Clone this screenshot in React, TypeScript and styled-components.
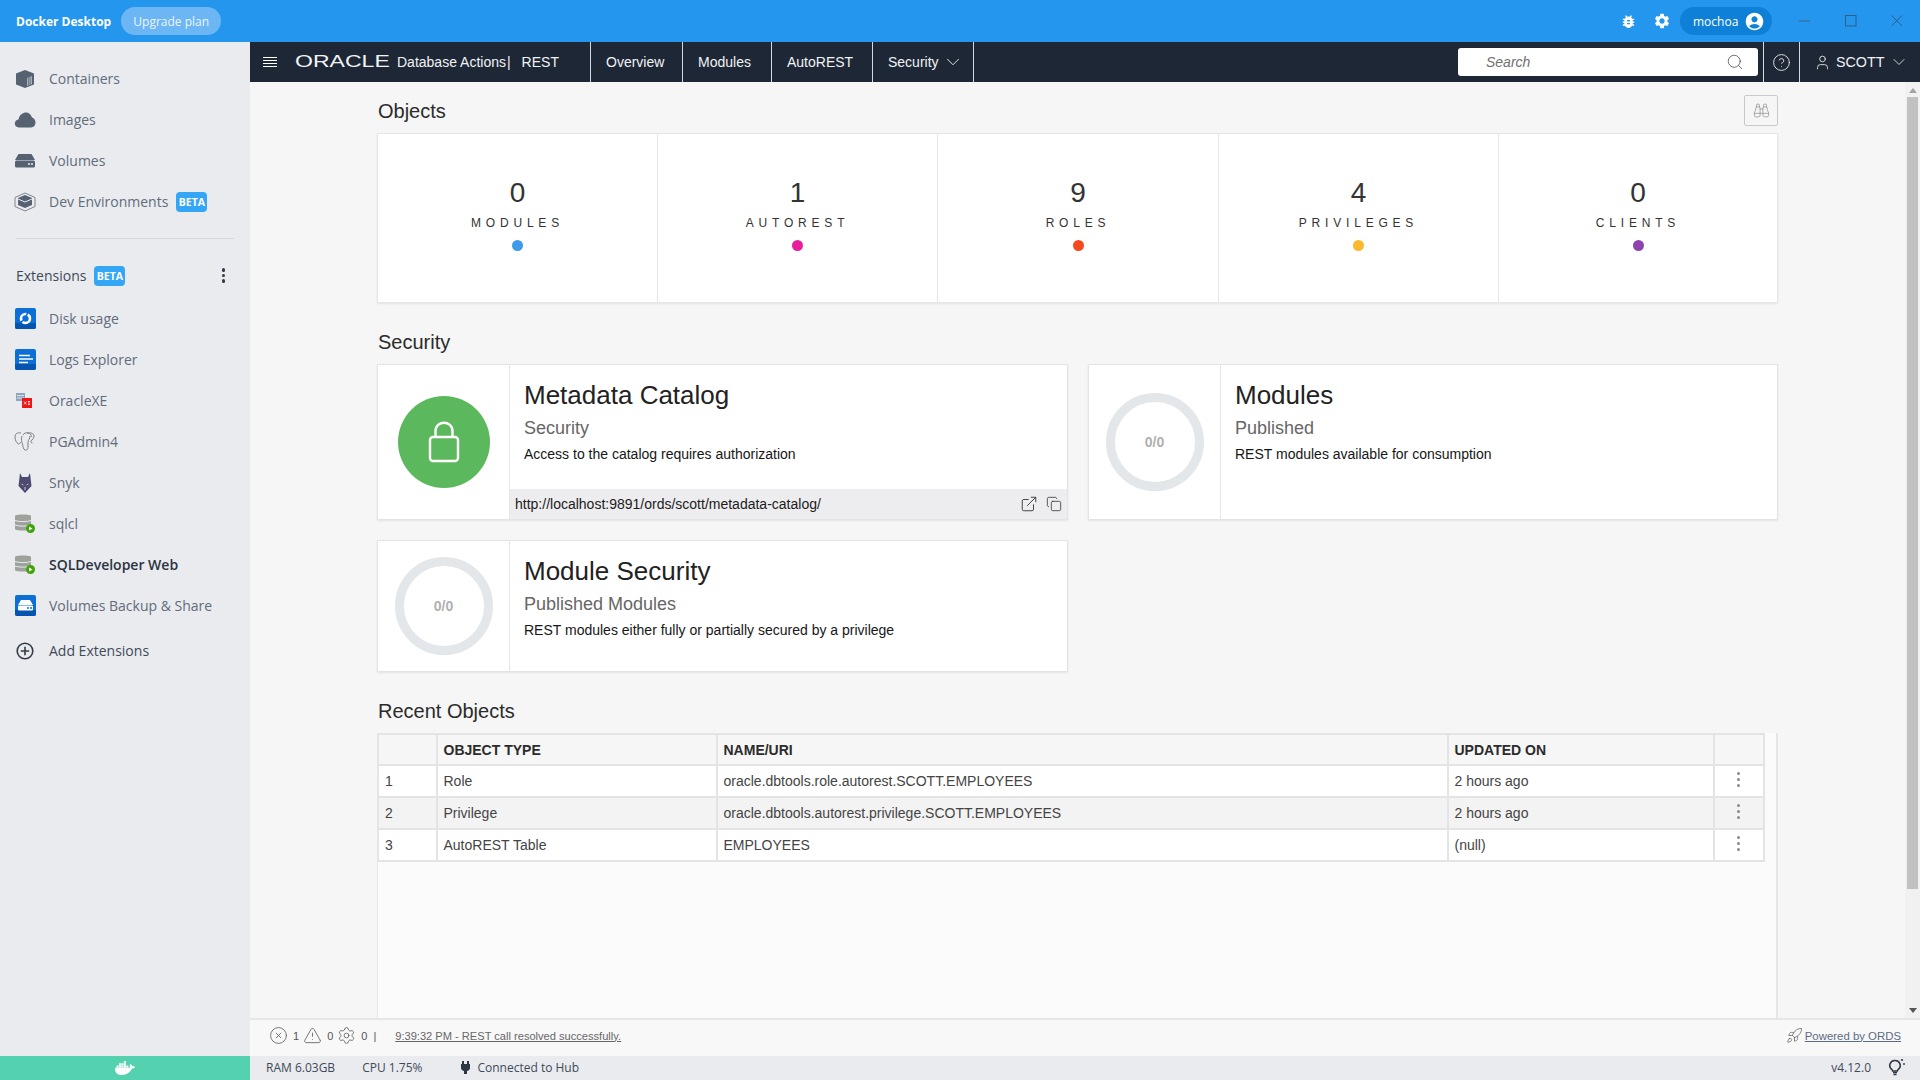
import React from "react";
import styled, { createGlobalStyle } from "styled-components";
import { ChevronDown, CircleHelp, CircleX, Copy, ExternalLink, Rocket, Search, Settings, TriangleAlert, User, Binoculars } from "lucide-react";
import { FaDocker } from "react-icons/fa";
import { MdAccountCircle, MdBugReport, MdSettings } from "react-icons/md";

const Global = createGlobalStyle`
  html, body { margin: 0; padding: 0; height: 100%; overflow: hidden; }
  * { box-sizing: border-box; }
  body { font-family: "Liberation Sans", Arial, sans-serif; }
`;

const Shell = styled.div`
  width: 1920px; height: 1080px; display: flex; flex-direction: column; overflow: hidden;
  background: #f6f6f6;
`;
const TopBar = styled.header`
  height: 42px; flex: none; background: #2496ed; display: flex; align-items: center;
  padding-left: 16px; color: #fff; font-family: "Open Sans", sans-serif;
`;
const Brand = styled.span`font-size: 12px; font-weight: 700;`;
const Upgrade = styled.span`
  margin-left: 10px; height: 28px; width: 100px; border-radius: 14px; background: #6db6f4;
  display: flex; align-items: center; justify-content: center; font-size: 12px; color: #eaf5ff;
`;
const TopRight = styled.div`margin-left: auto; display: flex; align-items: center;`;
const TopIcon = styled.span<{ $w: number }>`
  width: ${p => p.$w}px; display: flex; align-items: center; justify-content: center; color: #fff;
`;
const UserPill = styled.span`
  width: 92px; height: 28px; border-radius: 14px; background: #0f80d8; display: flex; align-items: center;
  justify-content: space-between; padding: 0 7px 0 13px; font-size: 12px; margin-left: 2px;
`;
const WinButtons = styled.div`display: flex; align-items: center; margin-left: 10px;`;
const WinBtn = styled.span`width: 46px; height: 42px; display: flex; align-items: center; justify-content: center;`;

const Body = styled.div`flex: 1; min-height: 0; display: flex;`;
const Sidebar = styled.aside`
  width: 250px; flex: none; background: #e9ebef; display: flex; flex-direction: column;
  font-family: "Open Sans", sans-serif; padding-top: 16px;
`;
const NavGroup = styled.nav`display: flex; flex-direction: column;`;
const NavItem = styled.div<{ $active?: boolean; $dark?: boolean }>`
  height: 41px; display: flex; align-items: center; padding-left: 14px; font-size: 14px;
  font-weight: ${p => (p.$active ? 600 : 400)};
  color: ${p => (p.$active ? "#2b3440" : p.$dark ? "#3f4a58" : "#626c7a")};
`;
const NavIcon = styled.span`width: 22px; height: 24px; margin-right: 13px; display: flex; align-items: center; justify-content: center;`;
const Beta = styled.span`
  margin-left: 8px; height: 20px; width: 31px; border-radius: 4px; background: #35a5f5; color: #fff;
  font-size: 10.5px; font-weight: 700; display: flex; align-items: center; justify-content: center;
`;
const Divider = styled.div`height: 1px; margin: 16px 16px 0; background: #d3d6dc;`;
const ExtHead = styled.div`
  height: 41px; margin: 16px 0 2px; display: flex; align-items: center; padding: 0 16px; font-size: 14px; color: #3f4a58;
`;
const Kebab = styled.span`
  margin-left: auto; margin-right: 9px; display: flex; flex-direction: column; gap: 2px;
`;
const KebabDot = styled.i<{ $c: string }>`width: 3.5px; height: 3.5px; border-radius: 50%; background: ${p => p.$c}; display: block;`;
const AddRow = styled.div`margin-top: 4px;`;
const Whale = styled.div`
  margin-top: auto; height: 24px; background: #54d2b0; display: flex; align-items: center; justify-content: center; color: #fff;
`;

const Main = styled.main`flex: 1; min-width: 0; display: flex; flex-direction: column; background: #f6f6f6;`;
const OracleBar = styled.div`
  height: 40px; flex: none; background: #1d2735; color: #f1f3f5; display: flex; align-items: stretch; font-size: 14px;
`;
const Burger = styled.span`
  width: 14px; margin-left: 13px; align-self: center; display: flex; flex-direction: column; gap: 2px;
`;
const BurgerLine = styled.i`height: 1.2px; background: #fff; display: block;`;
const OracleMark = styled.span`
  width: 93px; flex: none; margin-left: 18px; align-self: center; font-size: 16px; line-height: 1; font-weight: 400;
  transform: scaleX(1.44); transform-origin: left center; white-space: nowrap;
`;
const Product = styled.span`margin-left: 9px; width: 193px; align-self: center; white-space: nowrap;`;
const Sep = styled.span`margin: 0 11px 0 1px;`;
const NavTab = styled.span<{ $w: number; $gap?: number }>`
  width: ${p => p.$w}px; padding-left: 15px; border-left: 1px solid #d5d8dc; display: flex; align-items: center; gap: ${p => p.$gap ?? 0}px;
`;
const TabEnd = styled.span`border-left: 1px solid #d5d8dc;`;
const SearchBox = styled.div`
  margin-left: auto; width: 300px; height: 28px; align-self: center; background: #fff; border-radius: 3px;
  display: flex; align-items: center; justify-content: space-between; padding: 0 14px 0 28px;
  font-style: italic; color: #707070;
`;
const HelpCell = styled.span`
  margin-left: 5px; width: 37px; border-left: 1px solid #d5d8dc; border-right: 1px solid #d5d8dc;
  display: flex; align-items: center; justify-content: center;
`;
const ScottCell = styled.span`
  width: 120px; display: flex; align-items: center; padding-left: 14px; gap: 5px; font-size: 14.3px;
`;

const ContentRow = styled.div`flex: 1; min-height: 0; display: flex;`;
const Scroller = styled.div`flex: 1; min-width: 0; padding: 15px 127px 0 127px; display: flex; flex-direction: column; color: #222;`;
const HeadRow = styled.div<{ $top?: number; $bottom: number }>`
  height: 28px; flex: none; margin-top: ${p => p.$top ?? 0}px; margin-bottom: ${p => p.$bottom}px; display: flex; justify-content: space-between; align-items: flex-start;
`;
const Heading = styled.h2`margin: 0; font-size: 20px; line-height: 28px; font-weight: 400; color: #2b2b2b; padding-left: 1px;`;
const FindBtn = styled.span`
  width: 34px; height: 31px; margin-top: -2px; border: 1px solid #c9c9c9; border-radius: 2px; color: #8c8c8c;
  display: flex; align-items: center; justify-content: center;
`;
const StatsCard = styled.section`
  height: 170px; flex: none; display: grid; grid-template-columns: 280px 280px 281px 280px 1fr; background: #fff;
  border: 1px solid #e6e6e6; box-shadow: 0 1px 2px rgba(0,0,0,.08);
`;
const Stat = styled.div`
  display: flex; flex-direction: column; align-items: center; padding-top: 43px;
  &:not(:last-child) { border-right: 1px solid #e6e6e6; }
`;
const StatNum = styled.div`font-size: 28px; line-height: 32px; color: #333;`;
const StatLabel = styled.div`font-size: 12px; letter-spacing: 4.8px; line-height: 16px; margin-top: 6px; color: #333;`;
const Dot = styled.i<{ $c: string }>`width: 11px; height: 11px; border-radius: 50%; background: ${p => p.$c}; margin-top: 9px; display: block;`;
const CardGrid = styled.div`display: grid; grid-template-columns: 691px 690px; column-gap: 20px; row-gap: 20px; flex: none;`;
const Card = styled.article<{ $h: number }>`
  height: ${p => p.$h}px; display: flex; background: #fff; border: 1px solid #e4e4e4; box-shadow: 0 1px 2px rgba(0,0,0,.08);
`;
const CardSide = styled.div`width: 132px; flex: none; border-right: 1px solid #e6e6e6; display: flex; align-items: center; justify-content: center;`;
const GreenCircle = styled.div`width: 92px; height: 92px; border-radius: 50%; background: #5cb85c; color: #fff; display: flex; align-items: center; justify-content: center;`;
const Ring = styled.div<{ $d: number; $t: number }>`
  width: ${p => p.$d}px; height: ${p => p.$d}px; border-radius: 50%; border: ${p => p.$t}px solid #e4e7ea; color: #b0b0b0;
  display: flex; align-items: center; justify-content: center; font-size: 14px; font-weight: 700;
`;
const CardBody = styled.div`flex: 1; min-width: 0; display: flex; flex-direction: column;`;
const CardText = styled.div`flex: 1; padding: 14px 14px 0;`;
const CardTitle = styled.h3`margin: 0; font-size: 26px; line-height: 32px; font-weight: 400; color: #222;`;
const CardSub = styled.div`font-size: 18px; line-height: 22px; margin-top: 6px; color: #666;`;
const CardDesc = styled.div`font-size: 14px; line-height: 18px; margin-top: 6px; color: #161616;`;
const UrlBar = styled.div`
  height: 30px; flex: none; background: #ededef; display: flex; align-items: center; padding: 0 5px; font-size: 14px; color: #1b1b1b;
`;
const UrlIcons = styled.span`margin-left: auto; display: flex; align-items: center; gap: 8px; color: #333;`;
const TableWrap = styled.section`
  flex: 1; min-height: 0; background: #fbfbfb; border-right: 2px solid #e6e6e6; border-left: 1px solid #e6e6e6; padding-right: 12px;
`;
const DataTable = styled.table`
  border-collapse: collapse; table-layout: fixed; width: 1385px; font-size: 14px; color: #444; background: #fff;
`;
const Th = styled.th<{ $w: number }>`
  width: ${p => p.$w}px; height: 31px; padding: 0 6px; text-align: left; font-weight: 700; color: #2b2b2b; background: #f6f6f6;
  border: 2px solid #e4e4e4; border-left-width: 1px;
`;
const Td = styled.td`height: 32px; padding: 0 6px; border: 2px solid #e4e4e4; border-top-width: 1px; border-left-width: 1px;`;
const Tr = styled.tr<{ $alt?: boolean }>`background: ${p => (p.$alt ? "#f3f3f3" : "#fff")};`;
const RowKebab = styled.span`display: flex; flex-direction: column; gap: 2.5px; align-items: center; margin: -3px 0 0 0;`;
const Scrollbar = styled.div`width: 15px; flex: none; background: #f1f1f1; display: flex; flex-direction: column; align-items: center; padding-top: 15px;`;
const Thumb = styled.div`width: 11px; height: 792px; background: #c1c1c1;`;
const Arrow = styled.i<{ $down?: boolean }>`
  width: 0; height: 0; display: block; border-left: 4px solid transparent; border-right: 4px solid transparent;
  ${p => (p.$down ? "border-top: 5px solid #555; margin-top: auto; margin-bottom: 5px;" : "border-bottom: 5px solid #a3a3a3; position: relative; top: -9px; margin-bottom: -5px;")}
`;
const StatusLine = styled.div`
  height: 38px; flex: none; background: #f8f8f9; border-top: 2px solid #e6e6e6; display: flex; align-items: center; padding: 0 19px 5px 19px;
  font-size: 11px; color: #555;
`;
const Counter = styled.span`display: flex; align-items: center; gap: 5px; margin-right: 4px;`;
const StatusSep = styled.span`margin: 0 19px 0 2px;`;
const StatusLink = styled.a`text-decoration: underline; color: #666; font-size: 11.1px;`;
const PoweredBy = styled.span`margin-left: auto; display: flex; align-items: center; gap: 2px; color: #555;`;
const PoweredLink = styled.a`text-decoration: underline; font-size: 11.4px; color: #5c6b82;`;
const BottomBar = styled.div`
  height: 24px; flex: none; background: #e9ebef; display: flex; align-items: center; padding: 0 14px 2px 16px; color: #3f4a58;
  font-family: "Open Sans", sans-serif; font-size: 12px;
`;
const BottomItem = styled.span<{ $ml?: number }>`margin-left: ${p => p.$ml ?? 0}px; display: flex; align-items: center; gap: 7px;`;
const Version = styled.span`margin-left: auto; display: flex; align-items: center; gap: 17px;`;

const ContainerIco = () => (
  <svg width="22" height="18" viewBox="0 0 22 18"><path d="M11 0l9 3.500v11L11 18l-9-3.500v-11z" fill="#566171" /><path d="M13 8l5-2v8l-5 2z" fill="#aab1bb" /><path d="M14.600 7.500v8M16.200 7v8" stroke="#566171" strokeWidth=".7" /></svg>
);
const CloudIco = () => (
  <svg width="22" height="16" viewBox="0 0 22 16"><path d="M5 15.500c-5.500 0-5.500-7.500-.5-8C5.500 2.500 9 .5 12 .5c3 0 5 2 6 5 5 1.500 4.500 10-1 10z" fill="#566171" /></svg>
);
const VolumeIco = () => (
  <svg width="22" height="14" viewBox="0 0 22 14"><path d="M4.500 0h13L21 6H1z" fill="#566171" /><rect x="1" y="6.600" width="20" height="7" rx="1.500" fill="#566171" /><circle cx="15" cy="10" r="1" fill="#e9ebef" /><circle cx="18" cy="10" r="1" fill="#e9ebef" /></svg>
);
const DevIco = () => (
  <svg width="22" height="20" viewBox="0 0 22 20"><path d="M11 3l7 3v7l-7 3-7-3V6z" fill="#566171" /><path d="M4 7l7 3 7-3" stroke="#e9ebef" fill="none" /><path d="M1 5.500L11 1l10 4.500v9L11 19 1 14.500z" fill="none" stroke="#7d8692" strokeWidth="1" /></svg>
);
const DiskIco = () => (
  <svg width="21" height="21" viewBox="0 0 21 21"><rect width="21" height="21" rx="2" fill="#0b6fd6" /><path d="M0 15h21v4a2 2 0 0 1-2 2H2a2 2 0 0 1-2-2z" fill="#0555b0" /><circle cx="10.500" cy="10.500" r="4.500" fill="none" stroke="#fff" strokeWidth="2.600" strokeDasharray="10 1.500" /></svg>
);
const LogsIco = () => (
  <svg width="21" height="21" viewBox="0 0 21 21"><rect width="21" height="21" rx="2" fill="#0b6fd6" /><path d="M0 15h21v4a2 2 0 0 1-2 2H2a2 2 0 0 1-2-2z" fill="#0555b0" /><path d="M4 6.500h11M4 10h14M4 13.500h9" stroke="#fff" strokeWidth="1.600" /></svg>
);
const OracleXeIco = () => (
  <svg width="18" height="18" viewBox="0 0 18 18"><rect x="0" y="1" width="9" height="8" fill="#8fa6bd" /><path d="M1 3.500h7M1 6h7" stroke="#d9e2ea" strokeWidth="1" /><rect x="6" y="6" width="10" height="10" fill="#f01515" /><path d="M8 9.500l2.500 3M10.500 9.500l-2.500 3M12 9.500h2M12 11h2M12 12.500h2" stroke="#fff" strokeWidth=".8" /></svg>
);
const PgIco = () => (
  <svg width="22" height="20" viewBox="0 0 22 20" fill="none" stroke="#7b7f86" strokeWidth="1"><path d="M7 1c-4-.8-6 1-6 4s1.500 6 3.500 7c1 .4 1.500-1 2-2M9 3c1-2 3-2.500 5-2s4 1.500 3 4M13 1c3-.5 7 0 7 3 0 2-2 4-3 5-1 1 .5 2 1.500 2" /><path d="M8 4c-1 3-.5 6 .5 8 .5 2 .5 5 2.500 6s3-1 3-3v-5c0-2 2-3 2-6" /></svg>
);
const SnykIco = () => (
  <svg width="16" height="20" viewBox="0 0 16 20"><path d="M3 0l2 4h6l2-4 1.500 13L8 20 1.500 13z" fill="#4c4a73" /><path d="M4.500 11l2 1M11.500 11l-2 1" stroke="#c8b68b" strokeWidth="1" /><path d="M7 14h2v3H7z" fill="#8f86a8" /></svg>
);
const SqlIco = () => (
  <svg width="22" height="20" viewBox="0 0 22 20"><path d="M1 2c0-2 16-2 16 0v13c0 2-16 2-16 0z" fill="#9da29b" /><path d="M1 6.500c4 1.500 12 1.500 16 0M1 11c4 1.500 12 1.500 16 0" stroke="#e9ebef" fill="none" /><circle cx="16.500" cy="14.500" r="4.500" fill="#3fa40b" /><path d="M15 12.500l3.500 2-3.500 2z" fill="#fff" /></svg>
);
const BackupIco = () => (
  <svg width="21" height="21" viewBox="0 0 21 21"><rect width="21" height="21" rx="2" fill="#0b6fd6" /><path d="M0 15h21v4a2 2 0 0 1-2 2H2a2 2 0 0 1-2-2z" fill="#0555b0" /><path d="M6 5h9l3 5H3z" fill="#fff" /><rect x="3" y="10.500" width="15" height="5" rx="1" fill="#fff" /><path d="M12 13h2M15 13h2" stroke="#0b6fd6" strokeWidth="1.500" /></svg>
);
const AddIco = () => (
  <svg width="18" height="18" viewBox="0 0 18 18" fill="none" stroke="#333c48" strokeWidth="1.600"><circle cx="9" cy="9" r="7.800" /><path d="M9 4.800v8.400M4.800 9h8.400" /></svg>
);
const PlugIco = () => (
  <svg width="9" height="13" viewBox="0 0 9 13"><path d="M1 3V0h2v3h3V0h2v3h1v4c0 2-2 3-3 3v3H3v-3C2 10 0 9 0 7V3z" fill="#2e3744" /></svg>
);
const LockIco = () => (
  <svg width="32" height="42" viewBox="0 0 32 42" fill="none" stroke="#fff" strokeWidth="2.400"><rect x="2" y="16" width="28" height="24" rx="3" /><path d="M7.500 16V10c0-11 17-11 17 0v6" /></svg>
);
const BulbIco = () => (
  <svg width="18" height="18" viewBox="0 0 18 18" fill="none"><path d="M7 2.500a5 5 0 0 1 3.200 9c-.6.5-.8 1-.9 1.500H4.700c-.1-.5-.3-1-.9-1.500A5 5 0 0 1 7 2.500z" stroke="#2e3744" strokeWidth="1.600" /><path d="M5 14.500h4M5.500 16.500h3" stroke="#2e3744" strokeWidth="1.500" /><circle cx="14" cy="2" r="1.100" fill="#2e3744" /><circle cx="16" cy="6" r=".9" fill="#2e3744" /></svg>
);
const MenuDots = ({ c }: { c: string }) => (
  <>
    <KebabDot $c={c} />
    <KebabDot $c={c} />
    <KebabDot $c={c} />
  </>
);

const primary: [React.ReactNode, string, boolean?][] = [
  [<ContainerIco />, "Containers"],
  [<CloudIco />, "Images"],
  [<VolumeIco />, "Volumes"],
  [<DevIco />, "Dev Environments", true],
];
const extensions: [React.ReactNode, string, boolean?][] = [
  [<DiskIco />, "Disk usage"],
  [<LogsIco />, "Logs Explorer"],
  [<OracleXeIco />, "OracleXE"],
  [<PgIco />, "PGAdmin4"],
  [<SnykIco />, "Snyk"],
  [<SqlIco />, "sqlcl"],
  [<SqlIco />, "SQLDeveloper Web", true],
  [<BackupIco />, "Volumes Backup & Share"],
];
const stats = [
  ["0", "MODULES", "#3d9be9"],
  ["1", "AUTOREST", "#e91e9c"],
  ["9", "ROLES", "#f4481e"],
  ["4", "PRIVILEGES", "#fbb92d"],
  ["0", "CLIENTS", "#8e44ad"],
];
const rows = [
  ["1", "Role", "oracle.dbtools.role.autorest.SCOTT.EMPLOYEES", "2 hours ago"],
  ["2", "Privilege", "oracle.dbtools.autorest.privilege.SCOTT.EMPLOYEES", "2 hours ago"],
  ["3", "AutoREST Table", "EMPLOYEES", "(null)"],
];

export default function App() {
  return (
    <Shell>
      <Global />
      <TopBar>
        <Brand>Docker Desktop</Brand>
        <Upgrade>Upgrade plan</Upgrade>
        <TopRight>
          <TopIcon $w={33}><MdBugReport size={17} /></TopIcon>
          <TopIcon $w={33}><MdSettings size={18} /></TopIcon>
          <UserPill>mochoa<MdAccountCircle size={21} /></UserPill>
          <WinButtons>
            <WinBtn><svg width="12" height="12" viewBox="0 0 12 12"><path d="M0 6h11" stroke="#3b6f9e" strokeWidth="1.300" /></svg></WinBtn>
            <WinBtn><svg width="12" height="12" viewBox="0 0 12 12"><rect x=".5" y=".5" width="10.500" height="10.500" fill="none" stroke="#2c5f8c" /></svg></WinBtn>
            <WinBtn><svg width="12" height="12" viewBox="0 0 12 12"><path d="M.5.500l10.500 10.500M11 .500L.5 11" stroke="#2c5f8c" /></svg></WinBtn>
          </WinButtons>
        </TopRight>
      </TopBar>
      <Body>
        <Sidebar>
          <NavGroup>
            {primary.map(([ico, label, beta]) => (
              <NavItem key={label}><NavIcon>{ico}</NavIcon>{label}{beta && <Beta>BETA</Beta>}</NavItem>
            ))}
          </NavGroup>
          <Divider />
          <ExtHead>Extensions<Beta>BETA</Beta><Kebab><MenuDots c="#2f3946" /></Kebab></ExtHead>
          <NavGroup>
            {extensions.map(([ico, label, active]) => (
              <NavItem key={label} $active={active}><NavIcon>{ico}</NavIcon>{label}</NavItem>
            ))}
          </NavGroup>
          <AddRow><NavItem $dark><NavIcon><AddIco /></NavIcon>Add Extensions</NavItem></AddRow>
          <Whale><FaDocker size={20} /></Whale>
        </Sidebar>
        <Main>
          <OracleBar>
            <Burger><BurgerLine /><BurgerLine /><BurgerLine /><BurgerLine /></Burger>
            <OracleMark>ORACLE</OracleMark>
            <Product>Database Actions<Sep>|</Sep>REST</Product>
            <NavTab $w={92}>Overview</NavTab>
            <NavTab $w={89}>Modules</NavTab>
            <NavTab $w={101}>AutoREST</NavTab>
            <NavTab $w={101} $gap={3}>Security<ChevronDown size={22} strokeWidth={1} /></NavTab>
            <TabEnd />
            <SearchBox>Search<Search size={18} strokeWidth={1} color="#444" /></SearchBox>
            <HelpCell><CircleHelp size={19} strokeWidth={1.1} /></HelpCell>
            <ScottCell><User size={17} strokeWidth={1.200} />SCOTT<ChevronDown size={20} strokeWidth={1} /></ScottCell>
          </OracleBar>
          <ContentRow>
            <Scroller>
              <HeadRow $bottom={8}>
                <Heading>Objects</Heading>
                <FindBtn><Binoculars size={17} strokeWidth={1} /></FindBtn>
              </HeadRow>
              <StatsCard>
                {stats.map(([n, l, c]) => (
                  <Stat key={l}><StatNum>{n}</StatNum><StatLabel>{l}</StatLabel><Dot $c={c} /></Stat>
                ))}
              </StatsCard>
              <HeadRow $top={25} $bottom={8}><Heading>Security</Heading></HeadRow>
              <CardGrid>
                <Card $h={156}>
                  <CardSide><GreenCircle><LockIco /></GreenCircle></CardSide>
                  <CardBody>
                    <CardText>
                      <CardTitle>Metadata Catalog</CardTitle>
                      <CardSub>Security</CardSub>
                      <CardDesc>Access to the catalog requires authorization</CardDesc>
                    </CardText>
                    <UrlBar>
                      http://localhost:9891/ords/scott/metadata-catalog/
                      <UrlIcons><ExternalLink size={18} strokeWidth={1.200} /><Copy size={16} strokeWidth={1.200} /></UrlIcons>
                    </UrlBar>
                  </CardBody>
                </Card>
                <Card $h={156}>
                  <CardSide><Ring $d={98} $t={9}>0/0</Ring></CardSide>
                  <CardBody>
                    <CardText>
                      <CardTitle>Modules</CardTitle>
                      <CardSub>Published</CardSub>
                      <CardDesc>REST modules available for consumption</CardDesc>
                    </CardText>
                  </CardBody>
                </Card>
                <Card $h={132}>
                  <CardSide><Ring $d={98} $t={9}>0/0</Ring></CardSide>
                  <CardBody>
                    <CardText>
                      <CardTitle>Module Security</CardTitle>
                      <CardSub>Published Modules</CardSub>
                      <CardDesc>REST modules either fully or partially secured by a privilege</CardDesc>
                    </CardText>
                  </CardBody>
                </Card>
              </CardGrid>
              <HeadRow $top={25} $bottom={8}><Heading>Recent Objects</Heading></HeadRow>
              <TableWrap>
                <DataTable>
                  <thead>
                    <tr>
                      <Th $w={58} />
                      <Th $w={280}>OBJECT TYPE</Th>
                      <Th $w={731}>NAME/URI</Th>
                      <Th $w={266}>UPDATED ON</Th>
                      <Th $w={50} />
                    </tr>
                  </thead>
                  <tbody>
                    {rows.map((r, i) => (
                      <Tr key={r[0]} $alt={i === 1}>
                        {r.map((c, j) => <Td key={j}>{c}</Td>)}
                        <Td><RowKebab><MenuDots c="#8a8a8a" /></RowKebab></Td>
                      </Tr>
                    ))}
                  </tbody>
                </DataTable>
              </TableWrap>
            </Scroller>
            <Scrollbar>
              <Arrow />
              <Thumb />
              <Arrow $down />
            </Scrollbar>
          </ContentRow>
          <StatusLine>
            <Counter><CircleX size={19} strokeWidth={1} />1</Counter>
            <Counter><TriangleAlert size={19} strokeWidth={1} />0</Counter>
            <Counter><Settings size={19} strokeWidth={1} />0</Counter>
            <StatusSep>|</StatusSep>
            <StatusLink>9:39:32 PM - REST call resolved successfully.</StatusLink>
            <PoweredBy><Rocket size={17} strokeWidth={1} /><PoweredLink>Powered by ORDS</PoweredLink></PoweredBy>
          </StatusLine>
          <BottomBar>
            <BottomItem>RAM 6.03GB</BottomItem>
            <BottomItem $ml={27}>CPU 1.75%</BottomItem>
            <BottomItem $ml={39}><PlugIco />Connected to Hub</BottomItem>
            <Version>v4.12.0<BulbIco /></Version>
          </BottomBar>
        </Main>
      </Body>
    </Shell>
  );
}
